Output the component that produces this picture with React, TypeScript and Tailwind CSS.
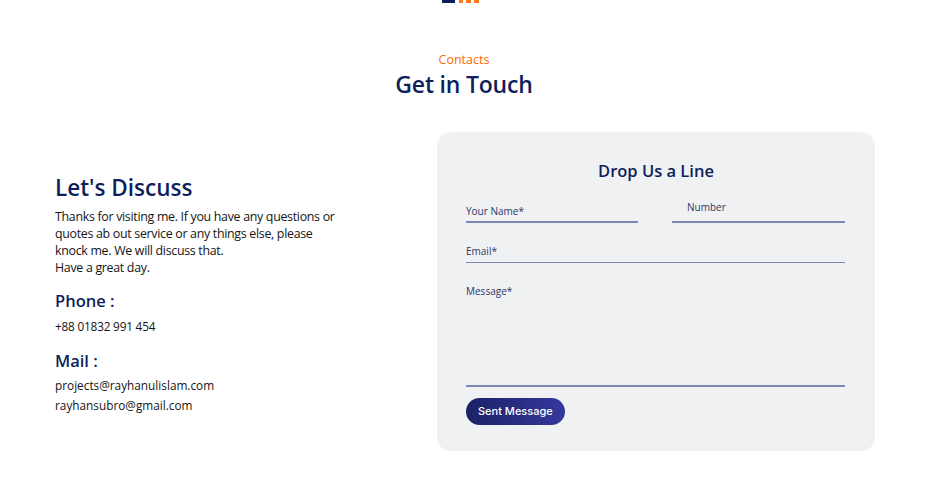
import React from "react";

const navy = "text-[#0e1f5b]";

function Field({ label, className = "", labelClass = "", lineGap = "mt-[4px]" }: { label: string; className?: string; labelClass?: string; lineGap?: string }) {
    return (
        <div className={className}>
            <div className={`text-[10px] leading-[14px] text-[#2b3668] ${labelClass}`}>{label}</div>
            <div className={`${lineGap} h-[1.5px] bg-[#7f87b6]`} />
        </div>
    );
}

export default function App() {
    return (
        <div className="w-full min-h-[484px] bg-white" style={{ fontFamily: "'Open Sans', 'Noto Sans', sans-serif" }}>
            {/* tail of the previous section */}
            <div className="flex justify-center h-[3px] pr-[29px]">
                <div className="flex items-start gap-[3px]">
                    <div className="w-[13px] h-[3px] bg-[#0e1f5b]" />
                    <div className="w-[4px] h-[3px] bg-[#ff7a1a] ml-[1px]" />
                    <div className="w-[5px] h-[3px] bg-[#ff7a1a]" />
                    <div className="w-[5px] h-[3px] bg-[#ff7a1a]" />
                </div>
            </div>

            <div className="flex flex-col items-center pt-[49px] pr-[22px]">
                <div className="text-[12.5px] leading-[16px] text-[#ff6a00]">Contacts</div>
                <h2 className={`mt-[1px] text-[23px] leading-[30px] font-semibold tracking-[-0.2px] ${navy}`}>Get in Touch</h2>
            </div>

            <div className="flex items-center pl-[55px] pr-[75px] mt-[33px]">
                <div className="w-[382px] shrink-0 pt-[6px]">
                    <h3 className={`text-[22.5px] leading-[28px] font-semibold ${navy}`}>Let's Discuss</h3>
                    <p className="mt-[6px] w-[286px] text-[12.4px] leading-[17px] tracking-[-0.3px] text-[#141414]">
                        Thanks for visiting me. If you have any questions or quotes ab out service or any things else, please knock me. We will discuss that.
                        <br />
                        Have a great day.
                    </p>
                    <h4 className={`mt-[14px] text-[16.5px] leading-[22px] font-semibold ${navy}`}>Phone :</h4>
                    <div className="mt-[6px] text-[11.8px] leading-[16px] tracking-[-0.2px] text-[#141414]">+88 01832 991 454</div>
                    <h4 className={`mt-[16px] text-[16.5px] leading-[22px] font-semibold ${navy}`}>Mail :</h4>
                    <div className="mt-[3px] text-[11.8px] leading-[20px] text-[#141414]">projects@rayhanulislam.com</div>
                    <div className="text-[11.8px] leading-[20px] text-[#141414]">rayhansubro@gmail.com</div>
                </div>

                <div className="w-[438px] h-[319px] rounded-[14px] bg-[#f0f1f3] px-[29px] pt-[27px]">
                    <h3 className={`text-center text-[16.5px] leading-[24px] font-semibold ${navy}`}>Drop Us a Line</h3>
                    <div className="flex items-start gap-[34px] mt-[21px]">
                        <Field label="Your Name*" className="w-[172px]" lineGap="mt-[3px]" />
                        <Field label="Number" className="w-[173px]" labelClass="pl-[15px] -mt-[4px]" lineGap="mt-[7px]" />
                    </div>
                    <Field label="Email*" className="mt-[21px] mr-[1px]" lineGap="mt-[4px]" />
                    <Field label="Message*" className="mt-[21px] mr-[1px]" lineGap="mt-[87px]" />
                    <button className="mt-[11px] h-[27px] px-[12px] rounded-full bg-gradient-to-r from-[#1c2266] to-[#34389d] text-white text-[11px] font-medium" style={{ fontFamily: "Inter, sans-serif" }}>
                        Sent Message
                    </button>
                </div>
            </div>
        </div>
    );
}
